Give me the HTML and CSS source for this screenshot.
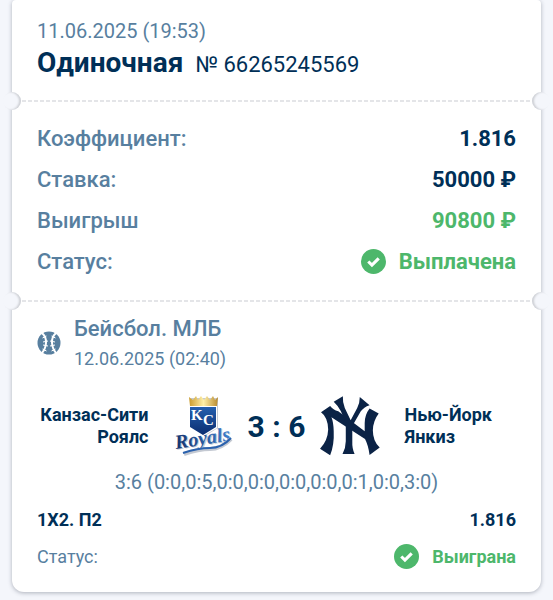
FILE: index.html
```html
<!DOCTYPE html>
<html lang="ru">
<head>
<meta charset="utf-8">
<meta name="viewport" content="width=device-width, initial-scale=1">
<title>Одиночная № 66265245569</title>
<link rel="stylesheet" href="styles.css">
</head>
<body>
<main class="ticket">
  <header class="ticket-head">
    <time class="ticket-date">11.06.2025 (19:53)</time>
    <h1 class="ticket-title">Одиночная <span class="ticket-number">№ 66265245569</span></h1>
  </header>

  <div class="tear"></div>

  <dl class="summary">
    <div class="row"><dt>Коэффициент:</dt><dd>1.816</dd></div>
    <div class="row"><dt>Ставка:</dt><dd>50000 ₽</dd></div>
    <div class="row"><dt>Выигрыш</dt><dd class="win">90800 ₽</dd></div>
    <div class="row"><dt>Статус:</dt><dd class="win status">
      <svg class="check" viewBox="0 0 24 24" aria-hidden="true"><circle cx="12" cy="12" r="12"/><path d="M7 12l3.500 3.500 6.500-6.500"/></svg>
      Выплачена</dd></div>
  </dl>

  <div class="tear"></div>

  <section class="event">
    <div class="league">
      <svg class="ball" viewBox="0 0 24 24" aria-hidden="true">
        <circle cx="12" cy="12" r="11.500"/>
        <path class="seam" d="M5 2Q9.500 6 9 12T5 22M19 2Q14.500 6 15 12T19 22"/>
        <path class="stitch" d="M5.500 7l4-2M6 11l5-1M6 14l5 1M5.500 18l4 2M18.500 7l-4-2M18 11l-5-1M18 14l-5 1M18.500 18l-4 2"/>
      </svg>
      <div>
        <h2 class="league-name">Бейсбол. МЛБ</h2>
        <time class="league-date">12.06.2025 (02:40)</time>
      </div>
    </div>

    <div class="match">
      <div class="team home"><span class="name-part">Канзас-Сити</span> Роялс</div>
      <svg class="logo" viewBox="0 0 60 60" role="img" aria-label="Канзас-Сити Роялс">
        <defs>
          <linearGradient id="shield" x1="0" y1="0" x2="0" y2="1"><stop offset="0" stop-color="#245fae"/><stop offset="1" stop-color="#0b2d70"/></linearGradient>
          <linearGradient id="gold" x1="0" y1="0" x2="1" y2="0"><stop offset="0" stop-color="#c99a2c"/><stop offset=".5" stop-color="#fff0a8"/><stop offset="1" stop-color="#b98a2d"/></linearGradient>
          <linearGradient id="script" x1="0" y1="0" x2="1" y2="0"><stop offset="0" stop-color="#14316c"/><stop offset="1" stop-color="#3d80cf"/></linearGradient>
        </defs>
        <path fill="#c4c9d2" d="M18 2h27v30l-13 8-14-8z"/>
        <path fill="url(#gold)" d="M17 10L16 1l4 3 3-4 2 4 3-4 3 4 3-4 3 4 3-4 2 4 3-3-1 9z"/>
        <path fill="#fff" d="M16 10h28v22l-14 8-14-8z"/>
        <path fill="url(#shield)" d="M17 11h26v20l-13 8-13-8z"/>
        <text x="18" y="24" class="crest">K</text>
        <text x="30" y="29" class="crest">C</text>
        <g transform="rotate(-9 3 53)">
          <text x="4" y="54" class="royals royals-edge">Royals</text>
          <text x="3" y="53" class="royals royals-face">Royals</text>
        </g>
        <path fill="none" stroke="#c4c9d2" stroke-width="4" d="M11 58Q26 53 37 53T58 43"/>
        <path fill="none" stroke="#2b62ae" stroke-width="2" d="M10 57Q25 52 37 52T58 42"/>
      </svg>
      <div class="score">3 : 6</div>
      <svg class="logo" viewBox="29 29 184 184" role="img" aria-label="Нью-Йорк Янкиз">
        <g fill="#0b2346">
          <path d="M57 60L29 79Q50 94 51 132Q50 166 26 191L57 211Q70 178 68 136Q67 108 61 94L164 161Q174 180 178 210L209 187Q188 168 188 134Q189 105 206 83L178 67Q163 86 163 112V137L82 76Q66 72 57 60Z"/>
          <path d="M96 30L68 47Q82 60 90 76L105 112V168Q105 188 95 207H132Q124 190 125 168V121L151 76Q160 63 178 57L148 32Q148 50 140 66L120 103L102 66Q95 50 96 30Z"/>
        </g>
      </svg>
      <div class="team">Нью-Йорк Янкиз</div>
    </div>

    <p class="periods">3:6 (0:0,0:5,0:0,0:0,0:0,0:0,0:1,0:0,3:0)</p>

    <div class="row outcome"><span>1X2. П2</span><span>1.816</span></div>
    <div class="row result"><span>Статус:</span><span class="win status">
      <svg class="check" viewBox="0 0 24 24" aria-hidden="true"><circle cx="12" cy="12" r="12"/><path d="M7 12l3.500 3.500 6.500-6.500"/></svg>
      Выиграна</span></div>
  </section>
</main>
</body>
</html>
```
FILE: styles.css
```css
:root {
  --page: #f4f6fb;
  --navy: #002f57;
  --steel: #587f9f;
  --green: #4db76b;
}

* { box-sizing: border-box; }

body {
  margin: 0;
  padding: 0 12px 7px;
  background: var(--page);
  color: var(--navy);
  font-family: Roboto, "Liberation Sans", sans-serif;
}

h1, h2, p, dl, dd { margin: 0; }

.ticket {
  background: #fff;
  border-radius: 4px 4px 12px 12px;
  box-shadow: 0 1px 4px rgba(40, 50, 70, .35);
}

.ticket-head { padding: 18px 25px 19px; }

.ticket-date {
  display: block;
  color: var(--steel);
  font-size: 20px;
  line-height: 26px;
}

.ticket-title {
  display: flex;
  align-items: baseline;
  gap: 12px;
  font-size: 28px;
  font-weight: 700;
  line-height: 37px;
}

.ticket-number { font-size: 22px; font-weight: 400; line-height: 28px; }

.tear {
  position: relative;
  height: 2px;
  margin: 0 10px;
  background: repeating-linear-gradient(90deg, #e4e5e8 0 4px, transparent 4px 6px);
}

.tear::before,
.tear::after {
  content: "";
  position: absolute;
  top: -8px;
  width: 18px;
  height: 18px;
  border-radius: 50%;
  background: var(--page);
}

.tear::before { left: -19px; box-shadow: inset -2px 0 2px #cfd1d6; }
.tear::after { right: -19px; box-shadow: inset 2px 0 2px #cfd1d6; }

.summary { padding: 16px 25px 18px; }

.row {
  display: flex;
  align-items: center;
  justify-content: space-between;
}

.summary .row { height: 41px; font-size: 22px; }
.summary dt { color: var(--steel); font-weight: 500; }
.summary dd { font-weight: 700; }
.row .win { color: var(--green); }

.status { display: flex; align-items: center; gap: 13px; }

.check { width: 25px; height: 25px; fill: var(--green); }
.check path { fill: none; stroke: #fff; stroke-width: 3; }

.event { padding: 11px 25px 18px; }

.league { display: flex; align-items: center; gap: 13px; color: var(--steel); }
.ball { width: 24px; height: 24px; fill: var(--steel); }
.ball path { fill: none; stroke: #fff; }
.seam { stroke-width: 2; }
.stitch { stroke-width: 1; }
.league-name { font-size: 22px; font-weight: 500; line-height: 32px; }
.league-date { display: block; font-size: 18px; line-height: 28px; }

.match {
  display: grid;
  grid-template-columns: 1fr 60px 64px 60px 1fr;
  align-items: center;
  column-gap: 12px;
  margin-top: 23px;
}

.team { padding: 0 12px; font-size: 18px; font-weight: 700; line-height: 22px; }
.home { padding-left: 0; text-align: right; }
.name-part { white-space: nowrap; }
.logo { width: 60px; height: 60px; overflow: visible; }
.score { font-size: 30px; font-weight: 700; text-align: center; white-space: nowrap; }

.crest { fill: #fff; font: 700 15px "Liberation Serif", serif; }
.royals { font: italic 700 20px "Liberation Serif", serif; }
.royals-face { fill: url(#script); }
.royals-edge { fill: #c4c9d2; }

.periods {
  margin-top: 13px;
  color: var(--steel);
  font-size: 20px;
  line-height: 26px;
  text-align: center;
}

.outcome { height: 38px; margin-top: 5px; font-size: 18px; font-weight: 700; }
.result { height: 36px; font-size: 18px; }
.result > :first-child { color: var(--steel); }
.result .win { font-weight: 700; }
```
